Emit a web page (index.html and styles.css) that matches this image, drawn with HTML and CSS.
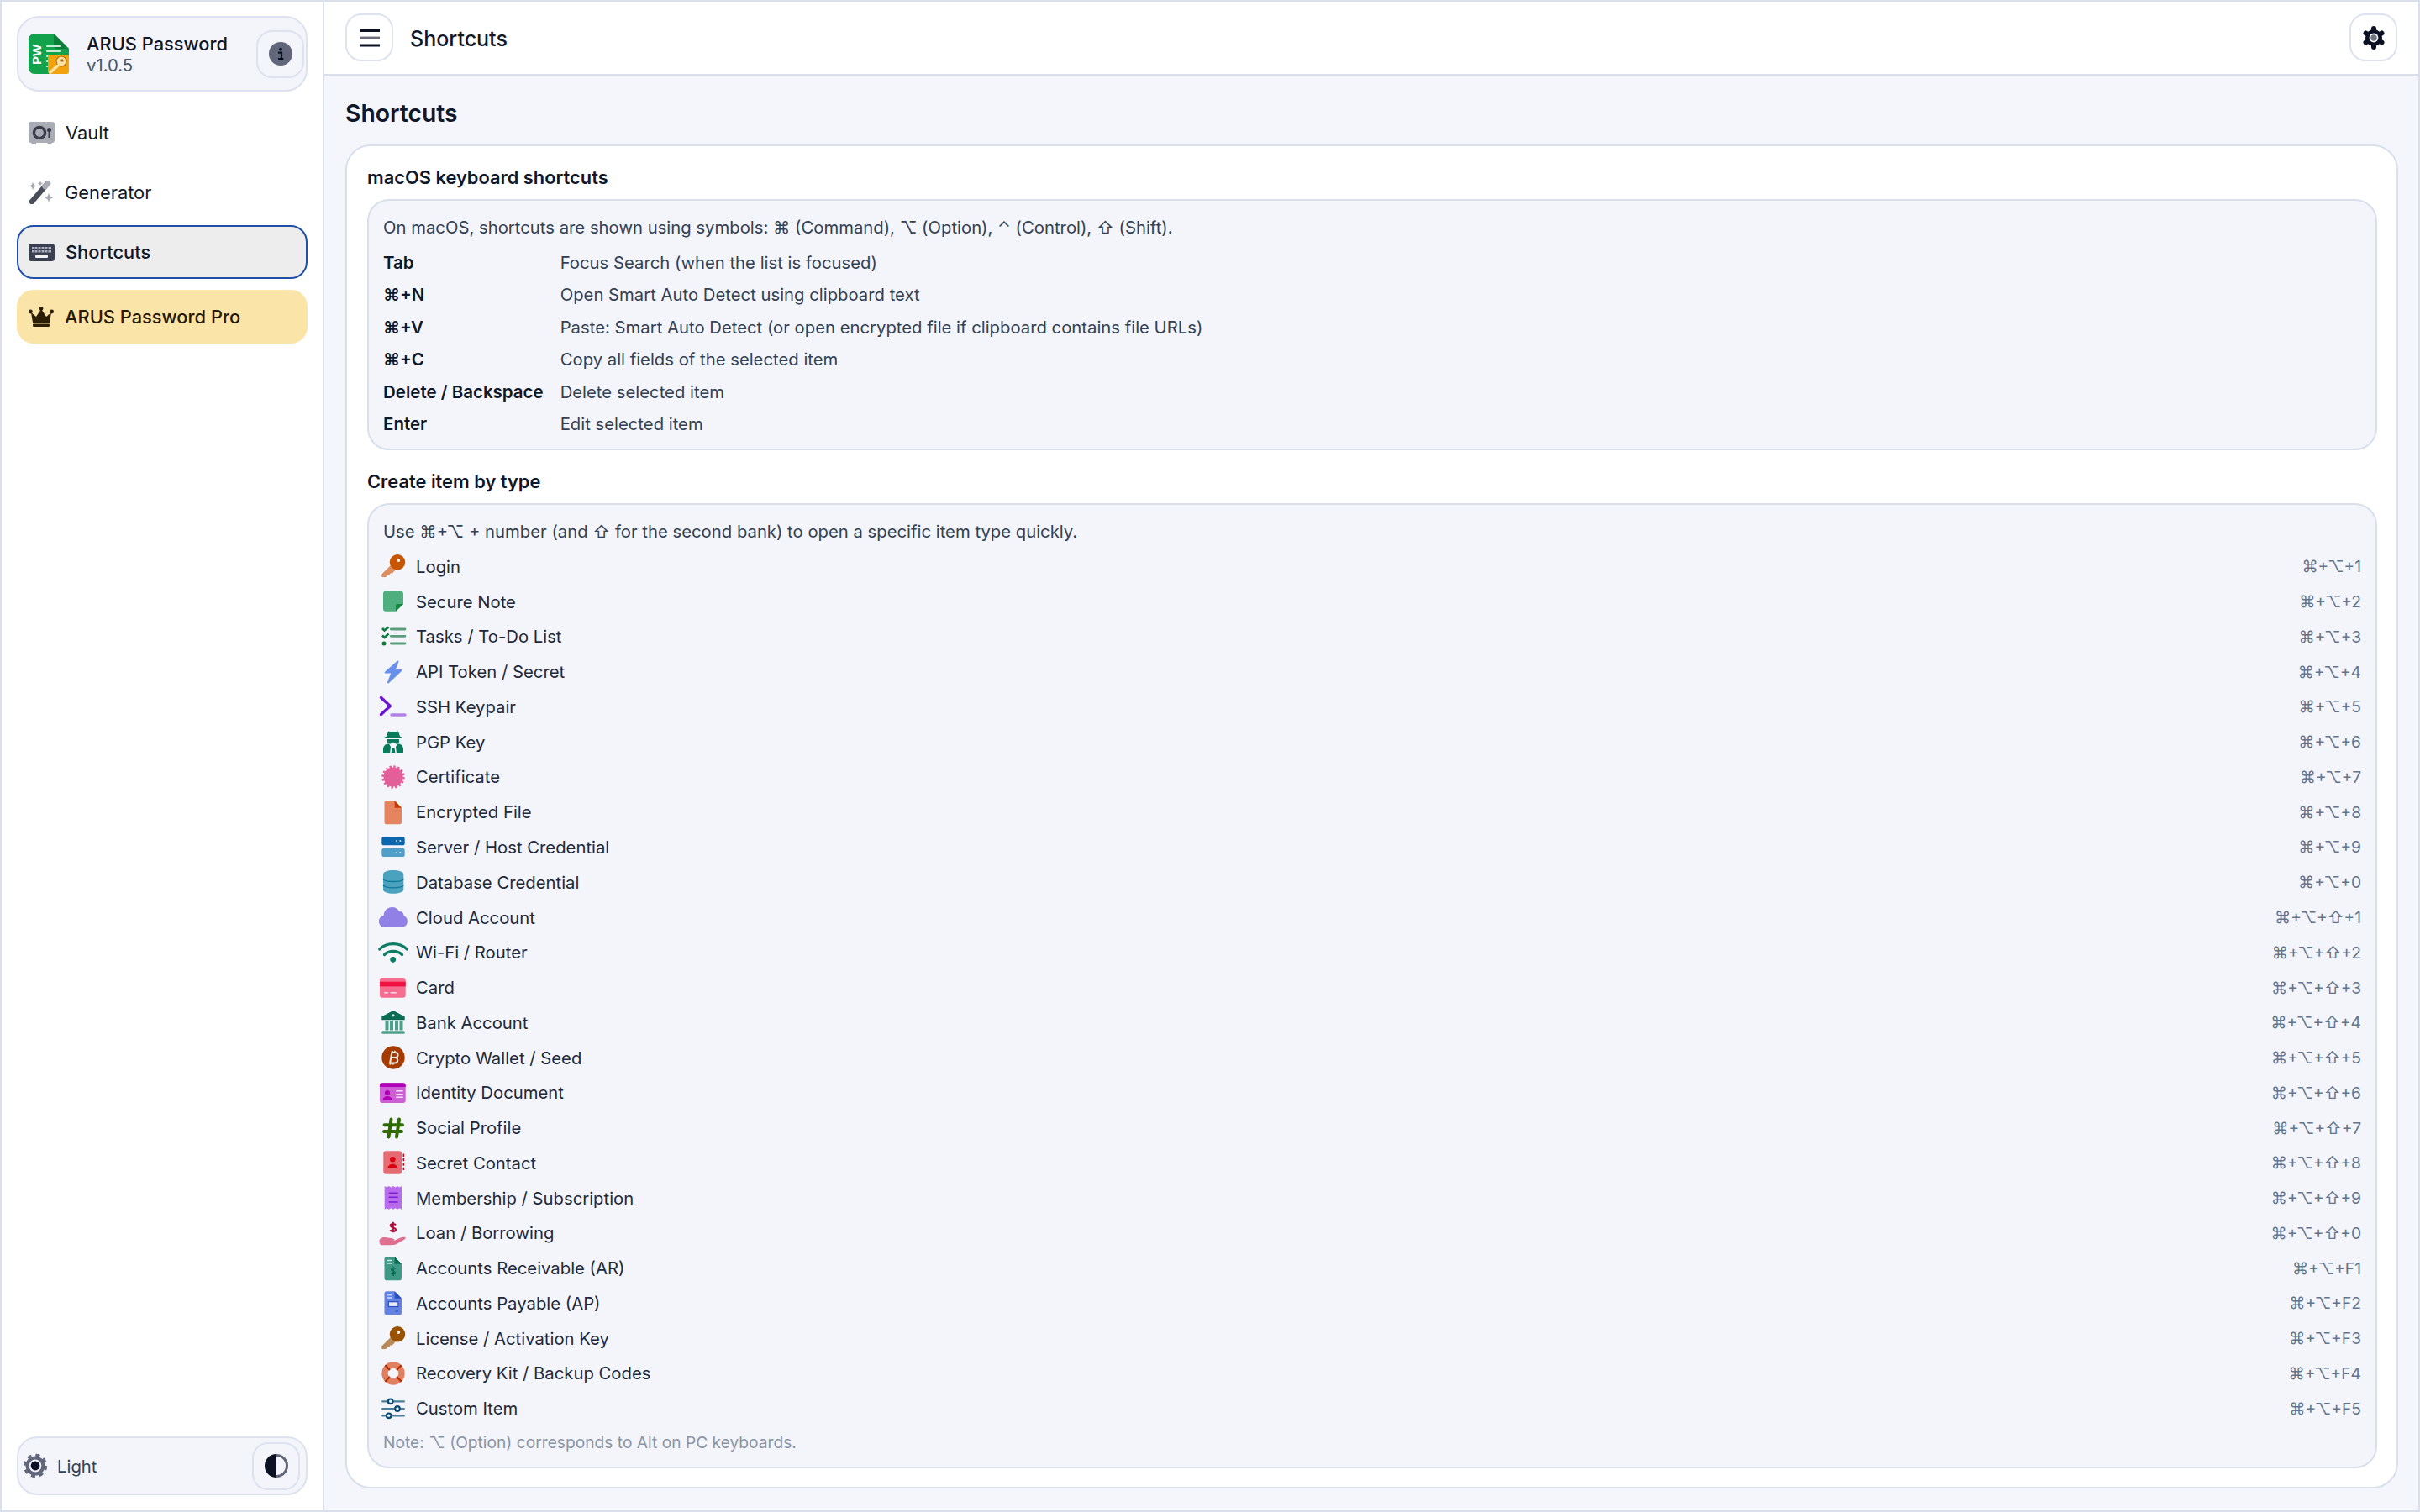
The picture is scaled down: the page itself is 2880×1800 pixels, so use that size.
FILE: index.html
```html
<!DOCTYPE html>
<html lang="en">
<head>
<meta charset="utf-8">
<title>ARUS Password - Shortcuts</title>
<link rel="stylesheet" href="styles.css">
</head>
<body>
<div class="app">
  <aside class="sidebar">
    <div class="side-top">
      <div class="brand">
        <svg class="logo" viewBox="0 0 48 48" width="48" height="48">
          <path d="M7 0H30L48 18V41a7 7 0 0 1-7 7H7a7 7 0 0 1-7-7V7a7 7 0 0 1 7-7Z" fill="#12a24c"/>
          <path d="M30 0L48 18H34a4 4 0 0 1-4-4Z" fill="#0b7f39"/>
          <g stroke="#c9ecd6" stroke-width="2.2" stroke-linecap="round"><path d="M22 15H38M22 21H38"/><path d="M22 27h1M22 33h1M22 39h1"/></g>
          <text x="0" y="0" class="pw" transform="translate(15 37) rotate(-90)">PW</text>
          <rect x="23" y="25" width="25" height="23" rx="3" fill="#f2a20d"/>
          <circle cx="39" cy="33" r="6" fill="#fbe3a5" stroke="#b9710a" stroke-width="1.2"/>
          <path d="M35 38L26 46" stroke="#fbe3a5" stroke-width="3.4" stroke-linecap="round"/>
          <circle cx="40" cy="32" r="1.8" fill="#b9710a"/>
        </svg>
        <div class="brand-text">
          <div class="brand-name">ARUS Password</div>
          <div class="brand-ver">v1.0.5</div>
        </div>
        <button class="icon-btn info-btn">
          <svg viewBox="0 0 28 28" width="28" height="28"><circle cx="14" cy="14" r="14" fill="#62667a"/><path d="M11 12.6h4v7.2M11 20.2h6.4" fill="none" stroke="#0b1022" stroke-width="2.2"/><circle cx="14" cy="8.6" r="1.9" fill="#0b1022"/></svg>
        </button>
      </div>
      <nav class="nav">
        <a class="nav-item">
          <svg viewBox="0 0 31 27" width="31" height="27"><path d="M3 24h6v3H4ZM22 24h6l-1 3h-4Z" fill="#a9abb5"/><rect width="31" height="25" rx="3" fill="#a9abb5"/><circle cx="13" cy="13" r="6.6" fill="none" stroke="#3b3e4a" stroke-width="3.4"/><circle cx="24.5" cy="9.5" r="2.6" fill="#3b3e4a"/><rect x="23.5" y="10" width="2" height="9" fill="#3b3e4a"/></svg>
          <span>Vault</span>
        </a>
        <a class="nav-item">
          <svg viewBox="0 0 30 28" width="30" height="28"><path d="M4 25L22 4" stroke="#4a4d5a" stroke-width="6.4" stroke-linecap="round"/><path d="M19.5 7L23 3" stroke="#a9abb5" stroke-width="6.4" stroke-linecap="round"/><path d="M5 2l1.4 3 3 1.4-3 1.4L5 11 3.6 7.8.6 6.4l3-1.4ZM14 .5l1 2 2 1-2 1-1 2-1-2-2-1 2-1ZM24 15l1.6 3.7 3.7 1.6-3.7 1.6L24 25.6l-1.6-3.7-3.7-1.6 3.7-1.6Z" fill="#a9abb5"/></svg>
          <span>Generator</span>
        </a>
        <a class="nav-item active">
          <svg viewBox="0 0 31 21" width="31" height="21"><rect width="31" height="21" rx="3.5" fill="#3a4050"/><g fill="#a9afc0"><path d="M4 4h23v2.4H4ZM4 8h23v2.4H4Z"/></g><g stroke="#3a4050" stroke-width="1"><path d="M7 3.5v7.5M11 3.5v7.5M15 3.5v7.5M19 3.5v7.5M23 3.5v7.5"/></g><rect x="8" y="13.4" width="15" height="3.6" rx="1" fill="#f1f1f4"/></svg>
          <span>Shortcuts</span>
        </a>
        <a class="nav-item pro">
          <svg viewBox="0 0 30 24" width="30" height="24"><path d="M15 3L21 12L27 7L25 19H5L3 7L9 12Z" fill="#2a1e05"/><circle cx="15" cy="2.4" r="2.4" fill="#2a1e05"/><circle cx="2.4" cy="6" r="2.4" fill="#2a1e05"/><circle cx="27.6" cy="6" r="2.4" fill="#2a1e05"/><rect x="5" y="20.4" width="20" height="3.6" rx="1.2" fill="#2a1e05"/></svg>
          <span>ARUS Password Pro</span>
        </a>
      </nav>
    </div>
    <div class="theme">
      <svg class="sun" viewBox="0 0 30 30" width="30" height="30"><circle cx="15" cy="15" r="11.5" fill="#62667a"/><circle cx="15" cy="15" r="12.2" fill="none" stroke="#62667a" stroke-width="4" stroke-dasharray="4.8 4.78"/><circle cx="15" cy="15" r="7.4" fill="#f3f5fb"/><circle cx="15" cy="15" r="5.4" fill="#0b1022"/></svg>
      <span class="theme-label">Light</span>
      <button class="icon-btn theme-btn">
        <svg viewBox="0 0 28 28" width="28" height="28"><path d="M14 0a14 14 0 0 0 0 28Z" fill="#0b1022"/><path d="M14 1.5a12.5 12.5 0 0 1 0 25" fill="none" stroke="#62667a" stroke-width="3"/></svg>
      </button>
    </div>
  </aside>
  <main class="main">
    <header class="topbar">
      <button class="icon-btn menu-btn">
        <svg viewBox="0 0 24 22" width="24" height="22"><path d="M0 2.5H24M0 20H24" stroke="#0b1022" stroke-width="3.2"/><path d="M0 11.2H24" stroke="#6a6d7a" stroke-width="3.2"/></svg>
      </button>
      <div class="top-title">Shortcuts</div>
      <button class="icon-btn gear-btn">
        <svg viewBox="0 0 28 28" width="28" height="28"><circle cx="14" cy="14" r="10" fill="#0b1022"/><g stroke="#0b1022" stroke-width="6" stroke-linecap="round"><path d="M14 3V25M4.5 8.5L23.5 19.5M23.5 8.5L4.5 19.5"/></g><circle cx="14" cy="14" r="5.4" fill="#fff"/><circle cx="14" cy="14" r="3.8" fill="#72757f"/></svg>
      </button>
    </header>
    <div class="content">
      <h1 class="page-title">Shortcuts</h1>
      <section class="card">
        <h2 class="sec-title">macOS keyboard shortcuts</h2>
        <div class="panel panel-mac">
          <p class="intro">On macOS, shortcuts are shown using symbols: ⌘ (Command), ⌥ (Option), ⌃ (Control), ⇧ (Shift).</p>
          <div class="keys">
            <b>Tab</b><span>Focus Search (when the list is focused)</span>
            <b>⌘+N</b><span>Open Smart Auto Detect using clipboard text</span>
            <b>⌘+V</b><span>Paste: Smart Auto Detect (or open encrypted file if clipboard contains file URLs)</span>
            <b>⌘+C</b><span>Copy all fields of the selected item</span>
            <b>Delete / Backspace</b><span>Delete selected item</span>
            <b>Enter</b><span>Edit selected item</span>
          </div>
        </div>
        <h2 class="sec-title sec-two">Create item by type</h2>
        <div class="panel panel-types">
          <p class="intro">Use ⌘+⌥ + number (and ⇧ for the second bank) to open a specific item type quickly.</p>
          <ul class="types">
            <li><svg class="ti" viewBox="0 0 36 30"><path d="M15.500 13.500L4.300 24.500V28H9.300L10.800 26H13.300L14.300 23.500H16.800L21.500 18.500Z" fill="#dd8d5f"/><circle cx="23" cy="10.300" r="9.200" fill="#c85500"/><circle cx="24.300" cy="8" r="1.900" fill="#f3f5fb"/></svg><span class="tn">Login</span><kbd>⌘+⌥+1</kbd></li>
            <li><svg class="ti" viewBox="0 0 36 30"><path d="M9 2.700H27a3 3 0 0 1 3 3V18L21 26.700H9a3 3 0 0 1-3-3V5.700a3 3 0 0 1 3-3Z" fill="#4fae7e"/><path d="M21 26.700V20a2 2 0 0 1 2-2h7Z" fill="#0f8a3c"/></svg><span class="tn">Secure Note</span><kbd>⌘+⌥+2</kbd></li>
            <li><svg class="ti" viewBox="0 0 36 30"><path d="M15.300 6H32M15.300 14.300H32M15.300 23H32" stroke="#5c9d7c" stroke-width="2.800" stroke-linecap="round"/><path d="M5 5l2.500 2.500L12.500 3.500M5 13.500l2.500 2.500 5-4.500" fill="none" stroke="#0b7a3b" stroke-width="2.700"/><circle cx="7" cy="23" r="2.500" fill="#0b7a3b"/></svg><span class="tn">Tasks / To-Do List</span><kbd>⌘+⌥+3</kbd></li>
            <li><svg class="ti" viewBox="0 0 36 30"><path d="M23.500 2.500L8.700 15.500h7.800L12 27.500 27.500 13h-8Z" fill="#6a90ea" stroke="#6a90ea" stroke-width="2" stroke-linejoin="round"/></svg><span class="tn">API Token / Secret</span><kbd>⌘+⌥+4</kbd></li>
            <li><svg class="ti" viewBox="0 0 36 30"><path d="M3.500 4.500L14.300 14.500 3.500 24.500" fill="none" stroke="#6b14d4" stroke-width="3.400" stroke-linecap="round" stroke-linejoin="round"/><path d="M16 25H32" stroke="#b280e6" stroke-width="3.400" stroke-linecap="round"/></svg><span class="tn">SSH Keypair</span><kbd>⌘+⌥+5</kbd></li>
            <li><svg class="ti" viewBox="0 0 36 30"><path d="M12 2.500Q18 4.500 24 2.500L26 8.500 30 10.500H6L10 8.500Z" fill="#0b7a5a"/><path d="M11 12h14v2.500a3 3 0 0 1-3 3h-1l-3-2-3 2h-1a3 3 0 0 1-3-3Z" fill="#0b7a5a"/><path d="M6 29V23a6 6 0 0 1 7-5.500L15 21l-1 8ZM30 29V23a6 6 0 0 0-7-5.500L21 21l1 8ZM16.500 22h3l1 7h-5Z" fill="#0b7a5a"/></svg><span class="tn">PGP Key</span><kbd>⌘+⌥+6</kbd></li>
            <li><svg class="ti" viewBox="0 0 36 30"><circle cx="18" cy="15" r="11.500" fill="#e45e9a"/><circle cx="18" cy="15" r="12.200" fill="none" stroke="#e45e9a" stroke-width="3" stroke-dasharray="2.395 2.395"/></svg><span class="tn">Certificate</span><kbd>⌘+⌥+7</kbd></li>
            <li><svg class="ti" viewBox="0 0 36 30"><path d="M10 1.300H19.700L28 9.700V26.700a2.500 2.500 0 0 1-2.500 2.500H10a2.500 2.500 0 0 1-2.500-2.500V3.800A2.500 2.500 0 0 1 10 1.300Z" fill="#e58560"/><path d="M19.700 1.300L28 9.700H19.700Z" fill="#c93a00"/></svg><span class="tn">Encrypted File</span><kbd>⌘+⌥+8</kbd></li>
            <li><svg class="ti" viewBox="0 0 36 30"><rect x="4.300" y="3" width="27.400" height="10.300" rx="2.600" fill="#0a66ad"/><rect x="4.300" y="16.700" width="27.400" height="10.300" rx="2.600" fill="#4f9fc8"/><g fill="#d5e6f2"><circle cx="22" cy="8" r="1"/><circle cx="26.300" cy="8" r="1"/><circle cx="22" cy="22" r="1"/><circle cx="26.300" cy="22" r="1"/></g></svg><span class="tn">Server / Host Credential</span><kbd>⌘+⌥+9</kbd></li>
            <li><svg class="ti" viewBox="0 0 36 30"><path d="M6 6C6 2.800 11.500 1 18 1S30.300 2.800 30.300 6V24C30.300 27 24.500 28.800 18 28.800S6 27 6 24Z" fill="#4ba2bf"/><path d="M6 11.500C8 15.500 28 15.500 30.300 11.500M6 18.500C8 23 28 23 30.300 18.500" fill="none" stroke="#0e7a9a" stroke-width="1.400"/></svg><span class="tn">Database Credential</span><kbd>⌘+⌥+0</kbd></li>
            <li><svg class="ti" viewBox="0 0 36 30"><path d="M7 27C3 27 .3 23.500 .3 20 .3 16 3 13.500 6 13 6 7 11 3 16 3 20 3 23 5 24.500 8 28 8 30 10 30 13 33 14.500 34.300 17 34.300 20 34.300 24 31 27 27 27Z" fill="#9180e6" transform="translate(.6 0)"/></svg><span class="tn">Cloud Account</span><kbd>⌘+⌥+⇧+1</kbd></li>
            <li><svg class="ti" viewBox="0 0 36 30"><path d="M1.800 11C10 2.500 26 2.500 34.200 11" fill="none" stroke="#0b7d62" stroke-width="3.200" stroke-linecap="round"/><path d="M7.500 17.500C13 12 23 12 28.500 17.500" fill="none" stroke="#0b7d62" stroke-width="3.200" stroke-linecap="round"/><circle cx="17.700" cy="23.300" r="3.400" fill="#0b7d62"/></svg><span class="tn">Wi-Fi / Router</span><kbd>⌘+⌥+⇧+2</kbd></li>
            <li><svg class="ti" viewBox="0 0 36 30"><rect x="2" y="3" width="30.700" height="23.700" rx="3" fill="#f56d8f"/><rect x="2" y="7.700" width="30.700" height="5.700" fill="#f0113f"/><path d="M7 20.700h5M14.700 20.700h7" stroke="#fde" stroke-width="1.400"/></svg><span class="tn">Card</span><kbd>⌘+⌥+⇧+3</kbd></li>
            <li><svg class="ti" viewBox="0 0 36 30"><path d="M8.500 13.500h4v11h-4ZM14 13.500h4v11h-4ZM20 13.500h4v11h-4ZM25.500 13.500h4v11h-4Z" fill="#4ea189"/><rect x="4.300" y="25.300" width="27.400" height="3.500" rx="1.200" fill="#4ea189"/><path d="M18 1L31.700 8.300V12.300H4.300V8.300Z" fill="#0b6b52"/><circle cx="18" cy="6.800" r="1.600" fill="#d9eee6"/></svg><span class="tn">Bank Account</span><kbd>⌘+⌥+⇧+4</kbd></li>
            <li><svg class="ti" viewBox="0 0 36 30"><circle cx="18" cy="15" r="13.700" fill="#a63b00"/><path d="M15.500 9H20.500a3 3 0 0 1 0 6H14.500M14.500 15H20a3.200 3.200 0 0 1 0 6.500H13.500M16.500 8.500L14 22M17 7l-.4 1.500M20 7l-.4 1.500M14.500 22l-.4 1.500M17.800 22l-.4 1.500" fill="none" stroke="#f7ebe4" stroke-width="2"/></svg><span class="tn">Crypto Wallet / Seed</span><kbd>⌘+⌥+⇧+5</kbd></li>
            <li><svg class="ti" viewBox="0 0 36 30"><rect x="2" y="3.300" width="30.700" height="23.700" rx="3" fill="#cd5fd6"/><path d="M5 3.300H29.700a3 3 0 0 1 3 3V8H2V6.300a3 3 0 0 1 3-3Z" fill="#b000b8"/><circle cx="11" cy="15" r="3.100" fill="#b000b8"/><path d="M5.700 23.500c.2-6 10.600-6 10.800 0Z" fill="#b000b8"/><path d="M21.300 12.700h8.400M21.300 16.700h8.400M21.300 20.200h8.400" stroke="#f5dff7" stroke-width="1.600"/></svg><span class="tn">Identity Document</span><kbd>⌘+⌥+⇧+6</kbd></li>
            <li><svg class="ti" viewBox="0 0 36 30"><path d="M15.500 4.500L12.500 25.500M25 4.500L22 25.500M7.500 11.300H29M7 19H28" fill="none" stroke="#2e6b00" stroke-width="4" stroke-linecap="round"/></svg><span class="tn">Social Profile</span><kbd>⌘+⌥+⇧+7</kbd></li>
            <li><svg class="ti" viewBox="0 0 36 30"><rect x="6.300" y="1.300" width="21.700" height="27.400" rx="3" fill="#e56a72"/><circle cx="17.300" cy="11.300" r="3.300" fill="#d9000f"/><path d="M11.500 21.500c.3-6.500 11.200-6.500 11.500 0Z" fill="#d9000f"/><path d="M30.300 4.500v19.500" stroke="#d9000f" stroke-width="1.500" stroke-dasharray="3.400 2"/></svg><span class="tn">Secret Contact</span><kbd>⌘+⌥+⇧+8</kbd></li>
            <li><svg class="ti" viewBox="0 0 36 30"><path d="M7.700 1L10.200 2.500 12.800 1 15.300 2.500 17.900 1 20.400 2.500 23 1 25.500 2.500 28 1V28.700L25.500 27.200 23 28.700 20.400 27.200 17.900 28.700 15.300 27.200 12.800 28.700 10.200 27.200 7.700 28.700Z" fill="#b86bea"/><path d="M12.700 9.300H23.700M12.700 14.300H23.700M12.700 20H23.700" stroke="#7a1fd6" stroke-width="1.400"/></svg><span class="tn">Membership / Subscription</span><kbd>⌘+⌥+⇧+9</kbd></li>
            <li><svg class="ti" viewBox="0 0 36 30"><path d="M21 5.400C20 3.600 15 3.300 14.700 5.900 14.500 9 21.300 7.800 21 11 20.700 13.500 15.500 13.300 14.400 11.200M17.800 1.800V14.200" fill="none" stroke="#b0103c" stroke-width="2.100"/><path d="M2 22.500C4 20 7 19.800 10 20.300L17 21.300C19 21.800 19.800 23 18.800 24L26 20.700C30.500 19 33.500 19.500 32.700 21.300 32 22.700 24 27 20 28.700 18.500 29.300 5 29.300 4 29.300 1.800 29.300 .8 24 2 22.500Z" fill="#e0708f"/></svg><span class="tn">Loan / Borrowing</span><kbd>⌘+⌥+⇧+0</kbd></li>
            <li><svg class="ti" viewBox="0 0 36 30"><path d="M10 1.300H19.700L28 9.700V26.700a2.500 2.500 0 0 1-2.500 2.500H10a2.500 2.500 0 0 1-2.500-2.500V3.800A2.500 2.500 0 0 1 10 1.300Z" fill="#3e9a86"/><path d="M19.700 1.300L28 9.700H19.700Z" fill="#0b6b52"/><path d="M11 5.500h5M11 9h5" stroke="#cfe8e1" stroke-width="1.300"/><path d="M21 15.500C20 14 16 14 15.700 16.200 15.500 18.700 21 18 20.800 20.500 20.500 22.700 16.300 22.500 15.400 20.700M18.200 12.700V24" fill="none" stroke="#0b6b52" stroke-width="1.500"/></svg><span class="tn">Accounts Receivable (AR)</span><kbd>⌘+⌥+F1</kbd></li>
            <li><svg class="ti" viewBox="0 0 36 30"><path d="M10 1.300H19.700L28 9.700V26.700a2.500 2.500 0 0 1-2.500 2.500H10a2.500 2.500 0 0 1-2.500-2.500V3.800A2.500 2.500 0 0 1 10 1.300Z" fill="#6482e0"/><path d="M19.700 1.300L28 9.700H19.700Z" fill="#2b4fc4"/><path d="M11 5.500h5M11 9h5" stroke="#d5ddf7" stroke-width="1.300"/><rect x="12.400" y="13.700" width="11.500" height="5.800" fill="#e8ecfb" stroke="#2b4fc4" stroke-width="1.200"/><path d="M20.500 25h3.500" stroke="#2b4fc4" stroke-width="1.200"/></svg><span class="tn">Accounts Payable (AP)</span><kbd>⌘+⌥+F2</kbd></li>
            <li><svg class="ti" viewBox="0 0 36 30"><path d="M15.500 13.500L4.300 24.500V28H9.300L10.800 26H13.300L14.300 23.500H16.800L21.500 18.500Z" fill="#b88a5a"/><circle cx="23" cy="10.300" r="9.200" fill="#9a5200"/><circle cx="24.300" cy="8" r="1.900" fill="#f3f5fb"/></svg><span class="tn">License / Activation Key</span><kbd>⌘+⌥+F3</kbd></li>
            <li><svg class="ti" viewBox="0 0 36 30"><circle cx="18" cy="15" r="10" fill="none" stroke="#e08060" stroke-width="7.400"/><path d="M8.300 5.300L14 11M27.700 5.300L22 11M8.300 24.700L14 19M27.700 24.700L22 19" stroke="#b32d00" stroke-width="2.200"/></svg><span class="tn">Recovery Kit / Backup Codes</span><kbd>⌘+⌥+F4</kbd></li>
            <li><svg class="ti" viewBox="0 0 36 30"><path d="M4.300 6.300H31.700M4.300 15H31.700M4.300 23.300H31.700" stroke="#4a7f9a" stroke-width="2.200"/><g fill="#f3f5fb" stroke="#0a4a72" stroke-width="2.200"><circle cx="14.700" cy="6.300" r="2.800"/><circle cx="23" cy="15" r="2.800"/><circle cx="12.700" cy="23.300" r="2.800"/></g></svg><span class="tn">Custom Item</span><kbd>⌘+⌥+F5</kbd></li>
          </ul>
          <p class="note">Note: ⌥ (Option) corresponds to Alt on PC keyboards.</p>
        </div>
      </section>
    </div>
  </main>
</div>
</body>
</html>
```
FILE: styles.css
```css
* { box-sizing: border-box; }
html, body { margin: 0; padding: 0; height: 100%; overflow: hidden; }
body {
  font-family: Inter, "DejaVu Sans", "Noto Sans", sans-serif;
  color: #0f172a;
  background: #f4f6fc;
}
.app {
  display: flex;
  width: 2880px;
  height: 1800px;
  border: 2px solid #d9e0ec;
}
.sidebar {
  width: 384px;
  flex: none;
  background: #fff;
  border-right: 2px solid #d9e0ec;
  padding: 17px 18px 18px;
  display: flex;
  flex-direction: column;
  justify-content: space-between;
}
.brand {
  height: 90px;
  display: flex;
  align-items: center;
  background: #f3f5fb;
  border: 2px solid #dde2ee;
  border-radius: 26px;
  padding: 0 2px 0 12px;
}
.logo { flex: none; }
.pw { font: 700 15px "Liberation Sans", sans-serif; fill: #fff; }
.brand-text { margin-left: 21px; flex: 1; }
.brand-name { font-size: 21.85px; font-weight: 500; line-height: 28px; }
.brand-ver { font-size: 20.3px; line-height: 24px; color: #475569; }
.icon-btn {
  width: 57px;
  height: 57px;
  flex: none;
  display: flex;
  align-items: center;
  justify-content: center;
  padding: 0;
  background: transparent;
  border: 2px solid #dde2ee;
  border-radius: 19px;
}
.nav { margin-top: 17px; display: flex; flex-direction: column; gap: 7px; }
.nav-item {
  height: 64px;
  display: flex;
  align-items: center;
  gap: 13px;
  padding: 0 12px;
  border-radius: 20px;
  font-size: 21.85px;
  color: #0f172a;
  border: 2px solid transparent;
}
.nav-item svg { flex: none; }
.nav-item.active { background: #ededee; border-color: #1e50a8; font-weight: 500; }
.nav-item.pro { background: #fbe4a7; margin-top: 6px; font-weight: 500; color: #241a04; }
.theme {
  height: 70px;
  display: flex;
  align-items: center;
  background: #f3f5fb;
  border: 2px solid #dde2ee;
  border-radius: 24px;
  padding: 0 7px 0 5px;
}
.theme-label { margin-left: 11px; flex: 1; font-size: 20.3px; color: #334155; }
.main { flex: 1; min-width: 0; display: flex; flex-direction: column; }
.topbar {
  height: 88px;
  flex: none;
  display: flex;
  align-items: center;
  padding: 0 25px 1px 25px;
  background: #fff;
  border-bottom: 2px solid #d9e0ec;
}
.top-title { flex: 1; margin: 2px 0 0 20px; font-size: 25px; font-weight: 500; }
.content { padding: 25px 24px 0 25px; }
.page-title { margin: 0; font-size: 28.3px; font-weight: 600; line-height: 40px; }
.card {
  margin-top: 17px;
  height: 1600px;
  background: #fff;
  border: 2px solid #d9dfeb;
  border-radius: 30px;
  padding: 21px 23px 21px 24px;
}
.sec-title { margin: 0; font-size: 21.85px; font-weight: 600; line-height: 32px; }
.sec-two { margin-top: 21px; }
.panel {
  margin-top: 10px;
  background: #f3f5fb;
  border: 2px solid #d9dfeb;
  border-radius: 26px;
  padding: 16px 17px 13px;
  font-size: 20.3px;
  color: #334155;
}
.intro { margin: 0; line-height: 32px; }
.keys {
  margin-top: 9.5px;
  display: grid;
  grid-template-columns: auto 1fr;
  column-gap: 20px;
  row-gap: 6.6px;
  line-height: 32px;
}
.keys b { font-size: 20.5px; font-weight: 600; color: #0f172a; }
.types { list-style: none; margin: 4px 0 0; padding: 0; }
.types li {
  height: 41.77px;
  display: flex;
  align-items: center;
  font-size: 20.3px;
  color: #1e293b;
}
.ti { width: 36px; height: 30px; flex: none; margin-left: -6.4px; }
.tn { flex: 1; margin-left: 9.4px; }
kbd { font: inherit; font-size: 19.2px; color: #64748b; }
.note { margin: 3.5px 0 0; line-height: 32px; font-size: 19.2px; color: #8a94a6; }
```
